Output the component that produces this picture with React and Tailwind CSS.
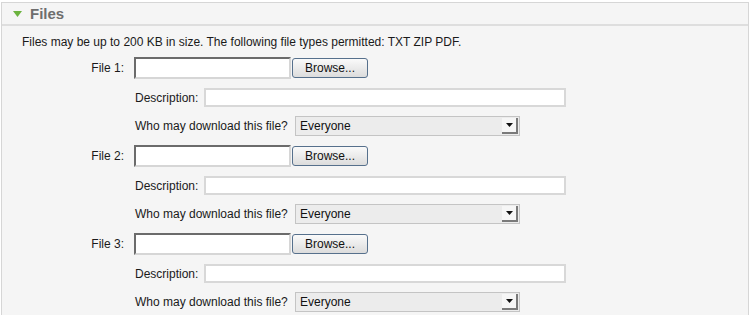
import React from 'react';

const files = [1, 2, 3];

function FileGroup({ n }) {
  return (
    <div className="flex flex-col">
      {/* File picker row */}
      <div className="flex h-[22px] items-center">
        <span className="w-[123px] pr-[1px] text-right">File {n}:</span>
        <div className="ml-[9px] h-[22px] w-[157px] border-2 border-t-[#6b6b6b] border-l-[#6b6b6b] border-r-[#d6d6d6] border-b-[#d6d6d6] bg-white" />
        <button
          type="button"
          className="ml-[1px] h-[20px] w-[76px] rounded-[3px] border border-[#56708c] bg-gradient-to-b from-[#fafafa] to-[#dcdcdc] text-[12px] leading-none text-[#111]"
        >
          Browse...
        </button>
      </div>

      {/* Description row */}
      <div className="mt-[9px] flex h-[19px] items-center pl-[133px]">
        <span className="w-[69px]">Description:</span>
        <div className="h-[19px] w-[362px] border-2 border-[#d8d8d8] bg-white" />
      </div>

      {/* Permission row */}
      <div className="mt-[9px] mb-[9px] flex h-[20px] items-center pl-[133px]">
        <span className="w-[160px]">Who may download this file?</span>
        <div className="flex h-[20px] w-[225px] items-center border border-[#c4c4c4] bg-[#ececec]">
          <span className="flex-1 pl-[4px] text-[12px] text-[#111]">Everyone</span>
          <span className="mr-[1px] flex h-[16px] w-[16px] items-center justify-center border-r-2 border-b-2 border-r-[#7a7a7a] border-b-[#7a7a7a] bg-[#f6f6f6]">
            <svg width="7" height="4" viewBox="0 0 7 4">
              <path d="M0 0h7L3.5 4z" fill="#111" />
            </svg>
          </span>
        </div>
      </div>
    </div>
  );
}

function App() {
  return (
    <div className="h-[317px] w-[750px] bg-white pt-[2px] pl-[1px] font-['Liberation_Sans',Arial,sans-serif] text-[12px] text-[#1a1a1a]">
      <div className="h-[313px] w-[748px] overflow-hidden border border-b-0 border-[#d6d6d6] bg-[#f5f5f5]">

        {/* Header */}
        <div className="flex h-[23px] items-center border-b-2 border-[#dedede] pl-[11px] pt-[1px]">
          <svg width="9" height="6" viewBox="0 0 9 6">
            <path d="M0 0h9L4.5 6z" fill="#6cb33f" />
          </svg>
          <span className="ml-[8px] text-[15px] font-bold text-[#6e6e6e]">Files</span>
        </div>

        {/* Content */}
        <div className="pt-[8px]">
          <p className="h-[16px] pl-[20px] leading-[16px]">
            Files may be up to 200 KB in size. The following file types permitted: TXT ZIP PDF.
          </p>
          <div className="mt-[7px]">
            {files.map((n) => (
              <FileGroup key={n} n={n} />
            ))}
          </div>
        </div>
      </div>
    </div>
  );
}

export default App;
